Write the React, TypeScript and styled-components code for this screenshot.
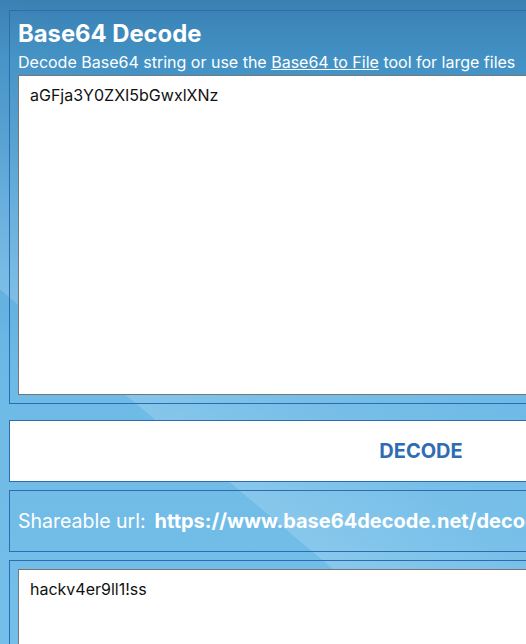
import React, { useState } from "react";
import styled, { createGlobalStyle } from "styled-components";

const GlobalStyle = createGlobalStyle`
  html, body {
    margin: 0;
    padding: 0;
    overflow: hidden;
    font-family: Inter, "Noto Sans", "Liberation Sans", sans-serif;
  }
`;

const Page = styled.div`
  width: 842px;
  height: 644px;
  box-sizing: border-box;
  padding: 10px 9px 0 9px;
  overflow: hidden;
  background:
    linear-gradient(40deg, rgba(255, 255, 255, 0) 26.2%, rgba(255, 255, 255, 0.16) 26.3%, rgba(255, 255, 255, 0.05) 38%, rgba(255, 255, 255, 0) 50%),
    linear-gradient(180deg, #3a80b3 0%, #4291c4 9%, #58a7d9 32%, #6ebae6 58%, #74bfe9 100%);
  display: flex;
  flex-direction: column;

  & > * {
    flex-shrink: 0;
  }
`;

const Panel = styled.section<{ $gap?: number }>`
  border: 1px solid #2d6bb3;
  padding: 8px;
  margin-bottom: ${(p) => p.$gap ?? 8}px;
  display: flex;
  flex-direction: column;
`;

const InputPanel = styled(Panel)`
  padding-top: 9px;
`;

const Title = styled.h1`
  margin: 0 0 4px 0;
  font-size: 23.8px;
  line-height: 1.2;
  font-weight: 700;
  color: #fff;
`;

const Subtitle = styled.p`
  margin: 0 0 3px 0;
  font-size: 16px;
  line-height: 1.2;
  color: #fff;

  a {
    color: #fff;
    text-decoration: underline;
  }
`;

const TextBox = styled.textarea<{ $h: number }>`
  box-sizing: border-box;
  width: 100%;
  height: ${(p) => p.$h}px;
  border: 1px solid #767676;
  background: #fff;
  padding: 10px 11px;
  font-family: Inter, "Noto Sans", "Liberation Sans", sans-serif;
  font-size: 16px;
  line-height: 1.2;
  color: #111;
  resize: none;
  outline: none;
`;

const DecodeButton = styled.button`
  box-sizing: border-box;
  height: 62px;
  margin: 0 0 8px 0;
  border: 1px solid #2d6bb3;
  background: #fff;
  color: #2f6cb2;
  font-family: Inter, "Noto Sans", "Liberation Sans", sans-serif;
  font-size: 20px;
  font-weight: 700;
  cursor: pointer;
`;

const ShareRow = styled.div`
  box-sizing: border-box;
  height: 62px;
  border: 1px solid #2d6bb3;
  padding: 0 8px;
  margin-bottom: 8px;
  display: flex;
  align-items: center;
  gap: 9px;
  color: #fff;
  font-size: 19.5px;
  white-space: nowrap;
  overflow: hidden;
`;

const ShareUrl = styled.strong`
  font-weight: 700;
  font-size: 20px;
`;

export default function App() {
  const [input, setInput] = useState("aGFja3Y0ZXI5bGwxlXNz");
  const [output] = useState("hackv4er9ll1!ss");

  return (
    <>
      <GlobalStyle />
      <Page>
        <InputPanel $gap={16}>
          <Title>Base64 Decode</Title>
          <Subtitle>
            Decode Base64 string or use the <a href="#">Base64 to File</a> tool for large files
          </Subtitle>
          <TextBox $h={320} value={input} onChange={(e) => setInput(e.target.value)} />
        </InputPanel>
        <DecodeButton>DECODE</DecodeButton>
        <ShareRow>
          <span>Shareable url:</span>
          <ShareUrl>https://www.base64decode.net/decode/aGFja3Y0ZXI5bGwxlXNz</ShareUrl>
        </ShareRow>
        <Panel>
          <TextBox $h={320} value={output} readOnly />
        </Panel>
      </Page>
    </>
  );
}
